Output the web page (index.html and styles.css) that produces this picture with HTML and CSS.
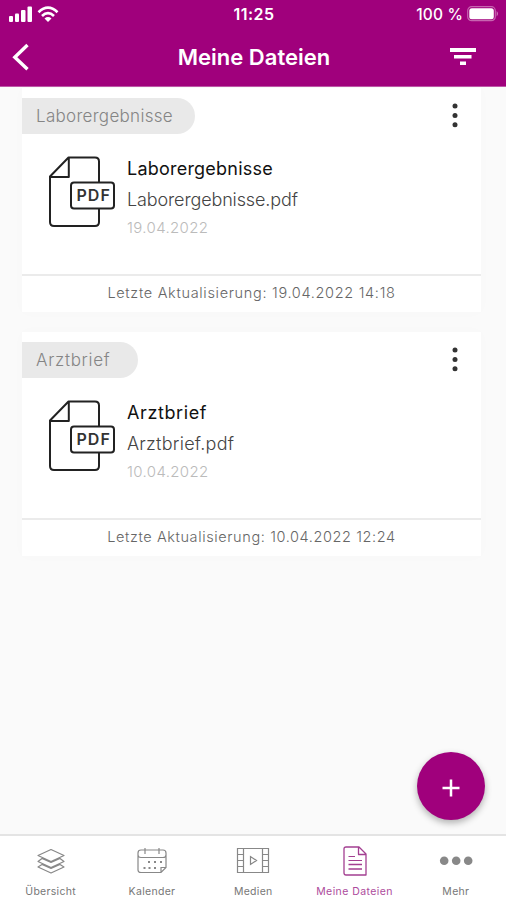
FILE: index.html
```html
<!DOCTYPE html>
<html lang="de">
<head>
<meta charset="utf-8">
<title>Meine Dateien</title>
<link rel="stylesheet" href="styles.css">
</head>
<body>
<div class="app">
  <header class="header">
    <div class="status">
      <svg class="signal" width="50" height="18" viewBox="0 0 50 18" fill="#fff">
        <rect x="0" y="11" width="4" height="6" rx="1"/><rect x="6" y="8.500" width="4" height="8.500" rx="1"/><rect x="12" y="5" width="4.500" height="12" rx="1"/><rect x="18.500" y="1.500" width="4.500" height="15.500" rx="1"/>
        <g fill="none" stroke="#fff" stroke-width="2.700"><path d="M29.500 7.200Q39 -1.800 48.500 7.200"/><path d="M33 11Q39 5.400 45 11"/></g>
        <path d="M35.500 13.400Q39 10.600 42.500 13.400L39 17Z"/>
      </svg>
      <span class="time">11:25</span>
      <span class="battery">100 %
        <svg width="32" height="16" viewBox="0 0 32 16"><rect x=".7" y=".7" width="27.600" height="14" rx="4" fill="none" stroke="#c765b0" stroke-width="1.200"/><rect x="2.300" y="2.200" width="24.500" height="11" rx="2.500" fill="#fff"/><path d="M29.700 5v5.500Q32 7.700 29.700 5" fill="#d78bc6"/></svg>
      </span>
    </div>
    <div class="titlebar">
      <svg class="back" width="20" height="28" viewBox="0 0 20 28" fill="none" stroke="#fff" stroke-width="3.400"><path d="M15.500 2L2.800 14.200L15.500 26.300"/></svg>
      <h1>Meine Dateien</h1>
      <svg class="filter" width="28" height="20" viewBox="0 0 28 20" fill="#fff"><path d="M1 1h26v4H1zM5 8h17.500v3.500H5zM11 14.500h6V18h-6z"/></svg>
    </div>
  </header>

  <main class="content">
    <article class="card">
      <div class="card-head">
        <span class="tag tag-lab"><span class="t-lab-tag">Laborergebnisse</span></span>
        <svg class="menu" width="8" height="26" viewBox="0 0 8 26" fill="#333"><circle cx="4" cy="3" r="2.500"/><circle cx="4" cy="12.400" r="2.500"/><circle cx="4" cy="21.800" r="2.500"/></svg>
      </div>
      <div class="card-body">
        <svg class="pdf" width="68" height="72" viewBox="0 0 68 72" fill="none" stroke="#222" stroke-width="2" stroke-linejoin="round">
          <path d="M20.500 1.500H47Q51 1.500 51 5.500V66Q51 70 47 70H6Q2 70 2 66V20.500ZM20.800 1.500V21H2"/>
          <rect x="23" y="26.500" width="43" height="26" rx="3" fill="#fff"/>
          <text x="28.500" y="45.200" class="pdf-text">PDF</text>
        </svg>
        <div class="info">
          <div class="name t-lab-name">Laborergebnisse</div>
          <div class="file t-lab-file">Laborergebnisse.pdf</div>
          <div class="date">19.04.2022</div>
        </div>
      </div>
      <footer class="updated">Letzte Aktualisierung: 19.04.2022 14:18</footer>
    </article>

    <article class="card">
      <div class="card-head">
        <span class="tag tag-letter"><span class="t-letter-tag">Arztbrief</span></span>
        <svg class="menu" width="8" height="26" viewBox="0 0 8 26" fill="#333"><circle cx="4" cy="3" r="2.500"/><circle cx="4" cy="12.400" r="2.500"/><circle cx="4" cy="21.800" r="2.500"/></svg>
      </div>
      <div class="card-body">
        <svg class="pdf" width="68" height="72" viewBox="0 0 68 72" fill="none" stroke="#222" stroke-width="2" stroke-linejoin="round">
          <path d="M20.500 1.500H47Q51 1.500 51 5.500V66Q51 70 47 70H6Q2 70 2 66V20.500ZM20.800 1.500V21H2"/>
          <rect x="23" y="26.500" width="43" height="26" rx="3" fill="#fff"/>
          <text x="28.500" y="45.200" class="pdf-text">PDF</text>
        </svg>
        <div class="info">
          <div class="name t-letter-name">Arztbrief</div>
          <div class="file t-letter-file">Arztbrief.pdf</div>
          <div class="date">10.04.2022</div>
        </div>
      </div>
      <footer class="updated updated-letter">Letzte Aktualisierung: 10.04.2022 12:24</footer>
    </article>
  </main>

  <button class="fab" aria-label="Hinzufügen"><svg width="18" height="18" viewBox="0 0 18 18" stroke="#fff" stroke-width="2.500"><path d="M9 .5v17M.5 9h17"/></svg></button>

  <nav class="tabs">
    <a class="tab">
      <svg width="30" height="30" viewBox="0 0 30 30" fill="none" stroke="#888" stroke-width="1.200" stroke-linejoin="round"><path d="M15 3.500L28 9.500L15 15.500L2 9.500ZM6 12.500L2 15.500L15 21.500L28 15.500L24 12.500L15 16.500ZM6 18.500L2 21L15 27L28 21L24 18.500L15 22.500Z"/></svg>
      <span>Übersicht</span>
    </a>
    <a class="tab">
      <svg width="32" height="30" viewBox="0 0 32 30" fill="none" stroke="#888" stroke-width="1.200"><path d="M2 9V7Q2 4 5 4H27Q30 4 30 7V9Q30 11.500 27 11.500H5Q2 11.500 2 9V24Q2 26.500 5 26.500H25L30 21.500V9M25 26.500V21.500H30M9 2V8M23 2V8"/><path d="M12 16h2M18 16h2M24 16h2M7.500 22h2M12.500 22h2M18 22h2" stroke-width="2"/></svg>
      <span>Kalender</span>
    </a>
    <a class="tab">
      <svg width="34" height="30" viewBox="0 0 34 30" fill="none" stroke="#888" stroke-width="1.200"><path d="M1.500 2.500H32.500V26.500H1.500ZM7.500 2.500V26.500M26.500 2.500V26.500M1.500 8.500h6M1.500 14.500h6M1.500 20.500h6M26.500 8.500h6M26.500 14.500h6M26.500 20.500h6M14.500 10.500V18.500L20.500 14.500Z"/></svg>
      <span>Medien</span>
    </a>
    <a class="tab active">
      <svg width="26" height="30" viewBox="0 0 26 30" fill="none" stroke="#a33f91" stroke-width="1.300" stroke-linejoin="round"><path d="M4 1H17L24 8V29H4Q2 29 2 27V3Q2 1 4 1ZM16.500 1V8.500H24"/><path d="M6.500 10.500H13M6.500 14.500H20" stroke-width="1.200"/><path d="M6.500 18.500H20M6.500 23H20" stroke-width="1.700"/></svg>
      <span>Meine Dateien</span>
    </a>
    <a class="tab">
      <svg width="34" height="30" viewBox="0 0 34 30" fill="#888"><circle cx="5.200" cy="14.800" r="4.300"/><circle cx="17.200" cy="14.800" r="4.300"/><circle cx="29.200" cy="14.800" r="4.300"/></svg>
      <span>Mehr</span>
    </a>
  </nav>
</div>
</body>
</html>
```
FILE: styles.css
```css
* { box-sizing: border-box; }
body { margin: 0; font-family: Inter, "Liberation Sans", sans-serif; background: #fafafa; }
.app { position: relative; width: 506px; height: 900px; display: flex; flex-direction: column; overflow: hidden; }
svg { display: block; flex: none; }

.header { height: 87px; flex: none; background: #a0007c; color: #fff; border-bottom: 1px solid #bd57a7; }
.status { height: 28px; display: grid; grid-template-columns: 1fr auto 1fr; align-items: center; padding: 0 7px 0 9px; }
.signal { margin-top: -1px; }
.time { font-size: 16px; font-weight: 600; letter-spacing: .5px; }
.battery { justify-self: end; display: flex; align-items: center; gap: 4px; font-size: 15.500px; font-weight: 500; letter-spacing: .15px; white-space: nowrap; }
.titlebar { height: 58px; display: grid; grid-template-columns: 1fr auto 1fr; align-items: center; padding: 0 29px 0 12px; }
.titlebar h1 { margin: 0 -18px 0 1px; font-size: 22px; line-height: 30px; font-weight: 600; letter-spacing: 0; }
.filter { justify-self: end; }

.content { flex: 1; display: flex; flex-direction: column; gap: 20px; padding: 1px 25px 0 22px; }
.card { height: 224px; background: #fff; display: flex; flex-direction: column; box-shadow: 0 0 14px rgba(0, 0, 0, .015); }
.card-head { height: 46px; padding: 10px 22px 0 0; display: flex; justify-content: space-between; align-items: center; }
.tag { height: 36px; display: flex; align-items: center; padding: 0 0 1px 14px; border-radius: 0 18px 18px 0; background: #e9e9e9; color: #858585; font-size: 17px; font-weight: 300; }
.tag-lab { width: 173px; }
.tag-letter { width: 116px; }
.t-lab-tag { letter-spacing: .3px; }
.t-letter-tag { letter-spacing: .7px; }
.card-body { flex: 1; display: flex; padding: 22px 0 0 26px; gap: 11px; }
.pdf-text { font: 600 16px Inter, sans-serif; letter-spacing: 1px; fill: #333; stroke: none; }
.info { padding-top: 1px; white-space: nowrap; }
.name { height: 24px; line-height: 24px; font-size: 18px; color: #111; }
.t-lab-name { letter-spacing: .22px; }
.t-letter-name { letter-spacing: .6px; }
.file { height: 24px; line-height: 24px; margin-top: 7px; font-size: 18px; font-weight: 300; color: #444; }
.t-lab-file { letter-spacing: -.13px; }
.t-letter-file { letter-spacing: .25px; }
.date { height: 20px; line-height: 20px; margin-top: 6px; font-size: 15px; font-weight: 300; color: #bbb; letter-spacing: .37px; }
.updated { height: 38px; border-top: 2px solid #ebebeb; text-align: center; line-height: 34px; font-size: 14.500px; font-weight: 300; color: #666; letter-spacing: .68px; }
.updated-letter { letter-spacing: .61px; }

.fab { position: absolute; left: 417px; top: 752px; width: 68px; height: 68px; padding: 3px 0 0; border: 0; border-radius: 50%; background: #a0007c; display: flex; align-items: center; justify-content: center; box-shadow: 0 3px 7px rgba(0, 0, 0, .3); }

.tabs { height: 66px; flex: none; background: #fff; border-top: 2px solid #e4e4e4; display: grid; grid-template-columns: repeat(5, 101.300px); }
.tab { display: flex; flex-direction: column; align-items: center; padding-top: 10px; color: #777; font-size: 10.500px; line-height: 16px; letter-spacing: .3px; white-space: nowrap; }
.tab span { margin-top: 8px; }
.tab.active { color: #ad4b9c; }
.tab.active span { letter-spacing: .42px; }
```
